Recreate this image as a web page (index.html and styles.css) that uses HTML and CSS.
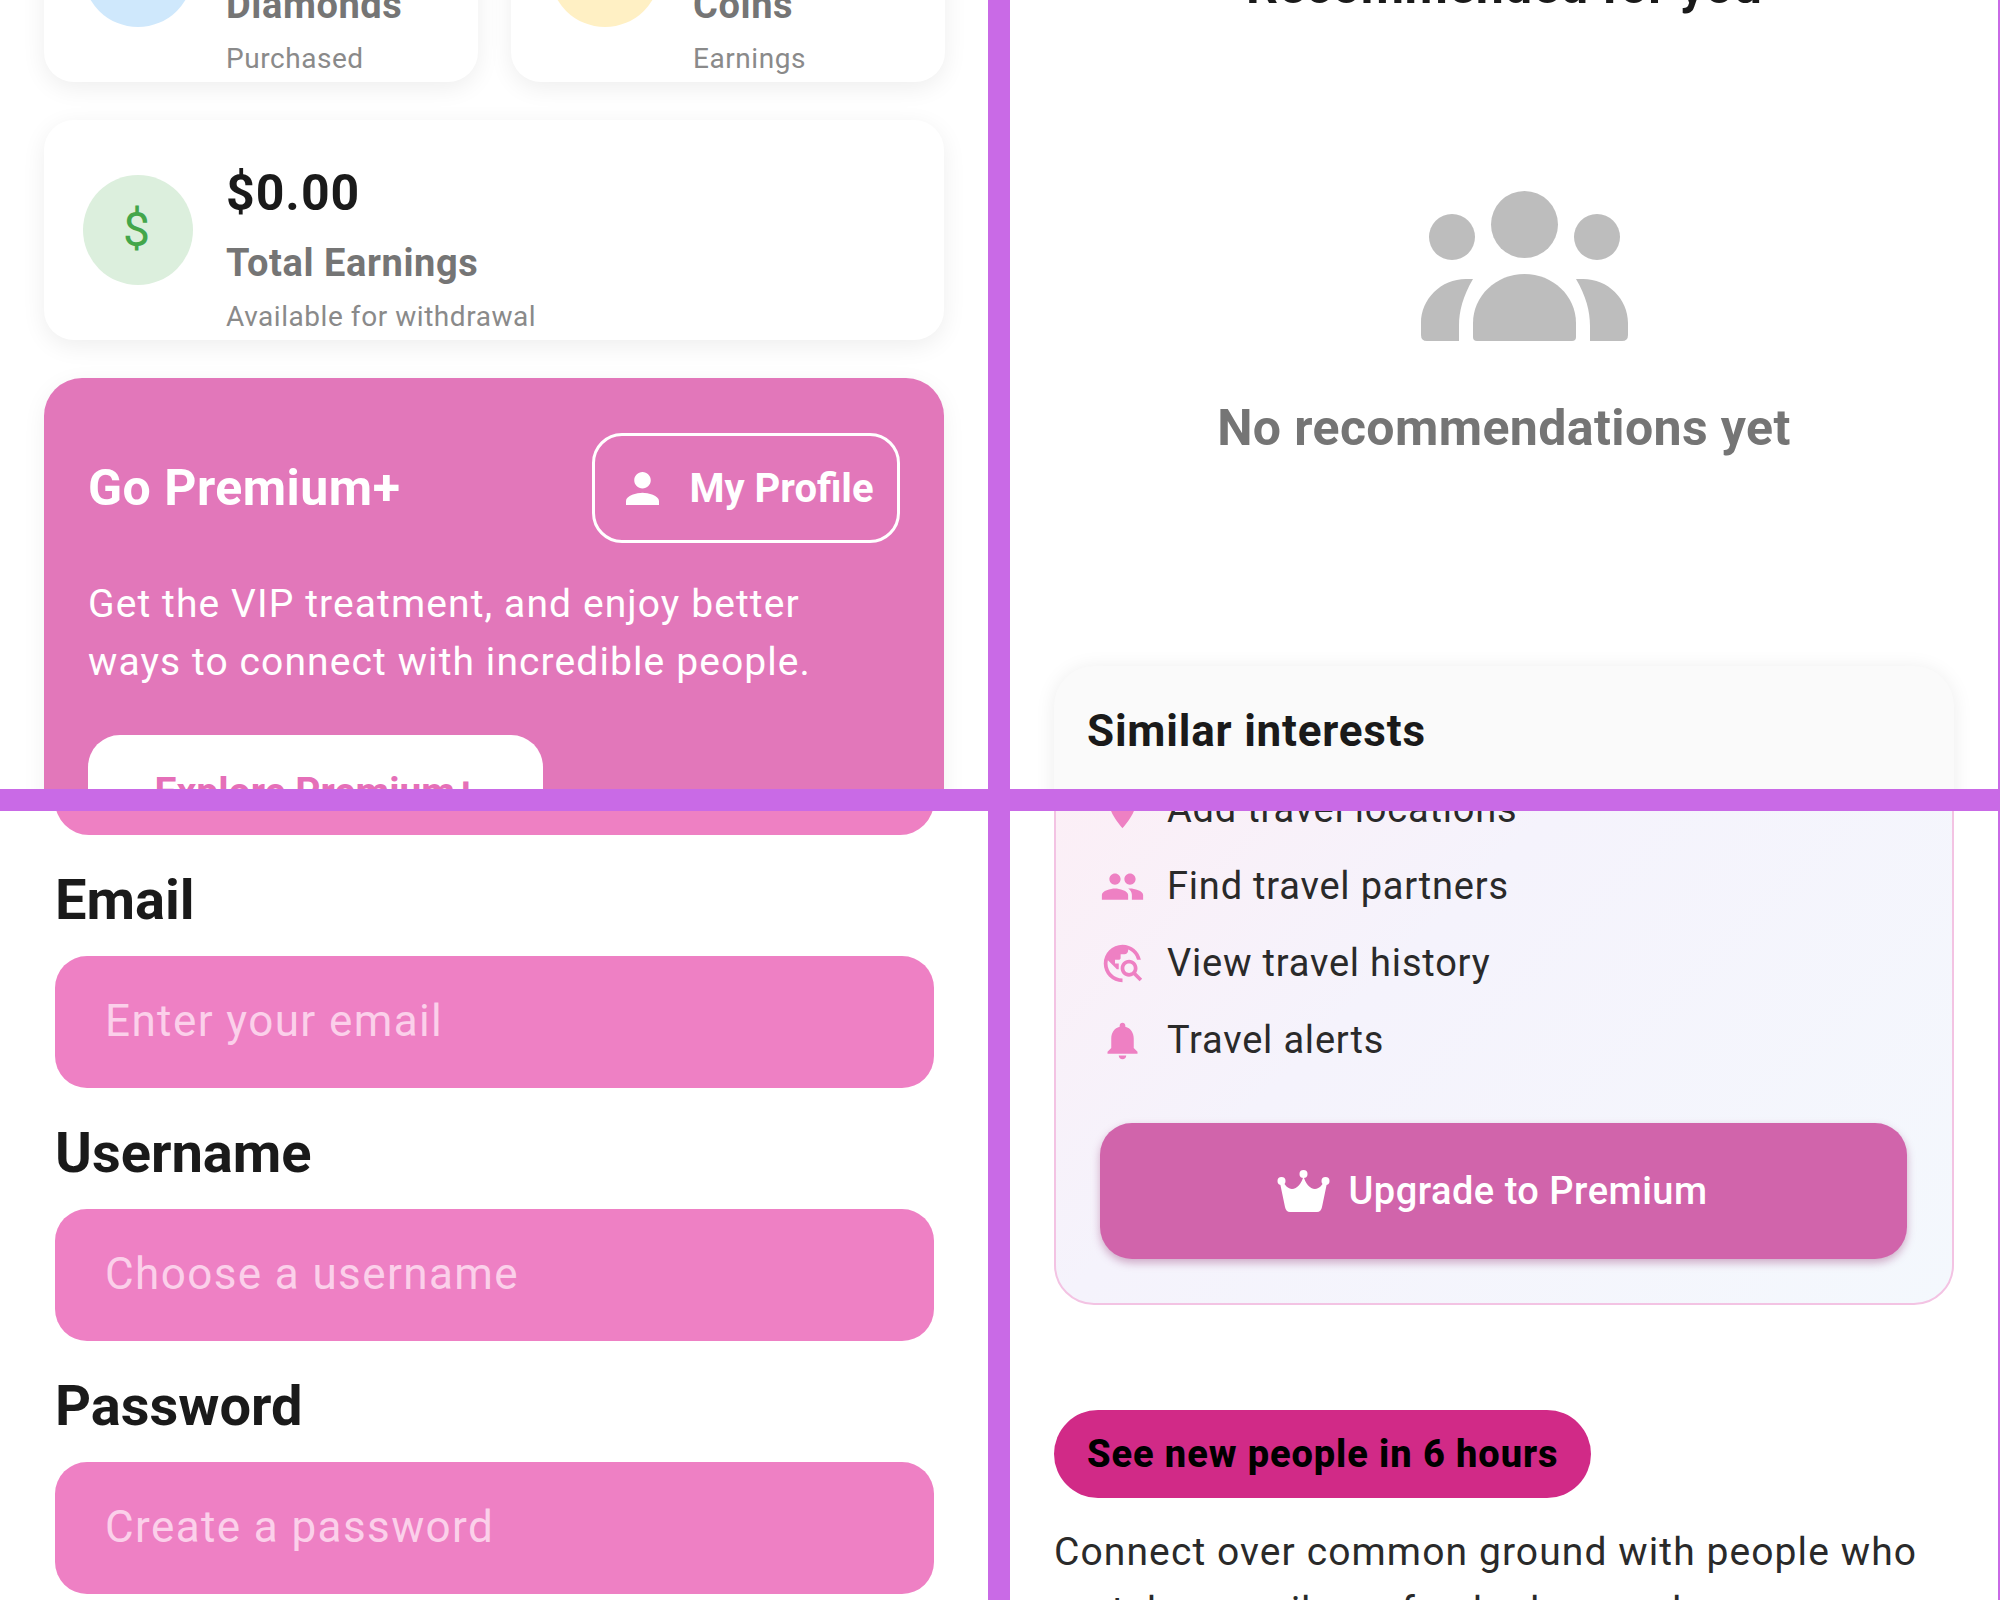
FILE: index.html
```html
<!DOCTYPE html>
<html lang="en">
<head>
<meta charset="utf-8">
<title>Screens</title>
<link rel="stylesheet" href="styles.css">
</head>
<body>
<main class="grid">
  <section class="panel">
    <div class="scroll scroll-a">
      <div class="stat-row">
        <div class="card">
          <div class="circle circle-blue"></div>
          <div class="stat-text">
            <div class="stat-title">Diamonds</div>
            <div class="stat-sub">Purchased</div>
          </div>
        </div>
        <div class="card">
          <div class="circle circle-yellow"></div>
          <div class="stat-text">
            <div class="stat-title">Coins</div>
            <div class="stat-sub">Earnings</div>
          </div>
        </div>
      </div>
      <div class="card earn-card">
        <div class="circle circle-green">$</div>
        <div class="stat-text">
          <div class="earn-value">$0.00</div>
          <div class="stat-title">Total Earnings</div>
          <div class="stat-sub">Available for withdrawal</div>
        </div>
      </div>
      <div class="premium">
        <div class="premium-head">
          <h2 class="premium-title">Go Premium+</h2>
          <button class="profile-btn">
            <svg class="profile-icon" viewBox="4 4 16 16"><path d="M12 12c2.210 0 4-1.790 4-4s-1.790-4-4-4-4 1.790-4 4 1.790 4 4 4zm0 2c-2.670 0-8 1.340-8 4v2h16v-2c0-2.660-5.330-4-8-4z"/></svg>
            My Profile
          </button>
        </div>
        <p class="premium-copy">Get the VIP treatment, and enjoy better ways to connect with incredible people.</p>
        <button class="explore-btn">Explore Premium+</button>
      </div>
    </div>
  </section>

  <section class="panel">
    <div class="scroll scroll-b">
      <h2 class="rec-title">Recommended for you</h2>
      <div class="empty">
        <svg class="empty-icon" viewBox="0 0 207 150">
          <circle cx="103.500" cy="33.500" r="33.500"/>
          <circle cx="31" cy="46" r="23"/>
          <circle cx="176" cy="46" r="23"/>
          <path d="M56 150Q52 150 52 146V132C52 105 75 83 103.500 83C132 83 155 105 155 132V146Q155 150 151 150Z"/>
          <path d="M38 150H6Q0 150 0 144V132C0 108 20 88 45 88H52C42 105 38 120 38 135Z"/>
          <path d="M169 150H201Q207 150 207 144V132C207 108 187 88 162 88H155C165 105 169 120 169 135Z"/>
        </svg>
        <div class="empty-text">No recommendations yet</div>
      </div>
      <div class="similar-top">
        <h3 class="similar-title">Similar interests</h3>
      </div>
    </div>
  </section>

  <section class="panel">
    <div class="scroll scroll-c">
      <div class="premium-tail"></div>
      <label class="field-label">Email</label>
      <div class="field">Enter your email</div>
      <label class="field-label">Username</label>
      <div class="field">Choose a username</div>
      <label class="field-label">Password</label>
      <div class="field">Create a password</div>
    </div>
  </section>

  <section class="panel panel-last">
    <div class="scroll scroll-d">
      <div class="travel-card">
        <ul class="travel-list">
          <li class="travel-item">
            <svg class="travel-icon" viewBox="0 0 24 24"><path d="M12 2C8.130 2 5 5.130 5 9c0 5.250 7 13 7 13s7-7.750 7-13c0-3.870-3.130-7-7-7zm0 9.500c-1.380 0-2.500-1.120-2.500-2.500s1.120-2.500 2.500-2.500 2.500 1.120 2.500 2.500-1.120 2.500-2.500 2.500z"/></svg>
            <span>Add travel locations</span>
          </li>
          <li class="travel-item">
            <svg class="travel-icon" viewBox="0 0 24 24"><path d="M16 11c1.660 0 2.990-1.340 2.990-3S17.660 5 16 5c-1.660 0-3 1.340-3 3s1.340 3 3 3zm-8 0c1.660 0 2.990-1.340 2.990-3S9.660 5 8 5C6.340 5 5 6.340 5 8s1.340 3 3 3zm0 2c-2.330 0-7 1.170-7 3.500V19h14v-2.500c0-2.330-4.670-3.500-7-3.500zm8 0c-.290 0-.620.020-.970.050 1.160.840 1.970 1.970 1.970 3.450V19h6v-2.500c0-2.330-4.670-3.500-7-3.500z"/></svg>
            <span>Find travel partners</span>
          </li>
          <li class="travel-item">
            <svg class="travel-icon" viewBox="0 0 24 24"><path d="M19.300 16.900c.4-.7.7-1.500.7-2.400 0-2.500-2-4.500-4.500-4.500S11 12 11 14.500s2 4.500 4.500 4.500c.9 0 1.700-.3 2.400-.7l3.200 3.200 1.400-1.400-3.200-3.200zm-3.800.1c-1.400 0-2.500-1.100-2.500-2.500s1.100-2.500 2.500-2.500 2.500 1.100 2.500 2.500-1.100 2.500-2.500 2.500zM12 20v2C6.480 22 2 17.520 2 12S6.480 2 12 2c4.840 0 8.870 3.440 9.800 8h-2.070c-.64-2.460-2.400-4.470-4.730-5.410V5c0 1.100-.9 2-2 2h-2v2c0 .55-.45 1-1 1H8v2h2v3H9l-4.790-4.790C4.080 10.790 4 11.380 4 12c0 4.410 3.590 8 8 8z"/></svg>
            <span>View travel history</span>
          </li>
          <li class="travel-item">
            <svg class="travel-icon" viewBox="0 0 24 24"><path d="M12 22c1.100 0 2-.9 2-2h-4c0 1.100.89 2 2 2zm6-6v-5c0-3.070-1.640-5.640-4.500-6.320V4c0-.83-.67-1.500-1.500-1.500s-1.500.67-1.500 1.500v.68C7.630 5.360 6 7.920 6 11v5l-2 2v1h16v-1l-2-2z"/></svg>
            <span>Travel alerts</span>
          </li>
        </ul>
        <button class="upgrade-btn">
          <svg class="crown" viewBox="0 0 53 42">
            <circle cx="26.500" cy="4" r="4"/>
            <circle cx="4.500" cy="11" r="4"/>
            <circle cx="48.500" cy="11" r="4"/>
            <path d="M26.500 6C28 13 33 19 38 19C42 19 45 15 47 12L50 13L45 37Q44 42 40 42H13Q9 42 8 37L3 13L6 12C8 15 11 19 15 19C20 19 25 13 26.500 6Z"/>
          </svg>
          Upgrade to Premium
        </button>
      </div>
      <div class="badge">See new people in 6 hours</div>
      <p class="connect">Connect over common ground with people who match your vibe, refreshed every day.</p>
    </div>
  </section>
</main>
</body>
</html>
```
FILE: styles.css
```css
* { box-sizing: border-box; }
html, body { margin: 0; padding: 0; }
body {
  width: 2000px;
  height: 1600px;
  overflow: hidden;
  background: #c96ae6;
  font-family: Roboto, "Liberation Sans", sans-serif;
  color: #1a1a1a;
}
button { font-family: inherit; border: 0; padding: 0; }
h2, h3, p, ul { margin: 0; padding: 0; }

.grid {
  display: grid;
  grid-template-columns: 988px 988px;
  grid-template-rows: 789px 789px;
  column-gap: 22px;
  row-gap: 22px;
  width: 1998px;
}
.panel { background: #fff; overflow: hidden; }
.scroll { display: flex; flex-direction: column; }

/* top left */
.scroll-a { padding: 0 44px; margin-top: -138px; }
.stat-row { display: grid; grid-template-columns: 434px 434px; column-gap: 33px; }
.card {
  height: 220px;
  background: #fff;
  border-radius: 30px;
  box-shadow: 0 6px 24px rgba(0, 0, 0, .07);
  display: flex;
  align-items: center;
  gap: 33px;
  padding: 0 39px;
}
.stat-text { align-self: flex-end; padding-bottom: 5px; }
.circle {
  flex: none;
  width: 110px;
  height: 110px;
  border-radius: 50%;
  display: flex;
  align-items: center;
  justify-content: center;
}
.circle-blue { background: #cfe8fc; }
.circle-yellow { background: #fff0c4; }
.circle-green { background: #dcefdd; color: #43a64a; font-size: 48px; font-weight: 400; line-height: 1; padding-right: 3px; }
.stat-title { font-size: 38px; font-weight: 700; color: #757575; letter-spacing: .6px; line-height: 44px; }
.stat-sub { font-size: 28px; color: #8a8a8a; letter-spacing: .55px; line-height: 36px; margin-top: 14px; }
.earn-card { margin-top: 38px; }
.earn-value { font-size: 50px; font-weight: 700; color: #1a1a1a; letter-spacing: 1px; line-height: 56px; margin-bottom: 20px; }

.premium {
  margin-top: 38px;
  background: #e277ba;
  border-radius: 38px;
  padding: 55px 44px 0;
  height: 500px;
  box-shadow: 0 6px 24px rgba(0, 0, 0, .06);
  color: #fff;
}
.premium-head { display: flex; align-items: center; justify-content: space-between; }
.premium-title { font-size: 50px; font-weight: 700; letter-spacing: .5px; }
.profile-btn {
  width: 308px;
  height: 110px;
  border: 3px solid #fff;
  border-radius: 30px;
  background: transparent;
  color: #fff;
  font-size: 40px;
  font-weight: 700;
  display: flex;
  align-items: center;
  justify-content: center;
  gap: 28px;
  padding-left: 6px;
}
.profile-icon { width: 37px; height: 33px; fill: #fff; }
.premium-copy { font-size: 39px; line-height: 57.500px; letter-spacing: 1.100px; margin-top: 33px; max-width: 780px; }
.explore-btn {
  display: block;
  width: 455px;
  height: 113px;
  margin-top: 44px;
  border-radius: 32px;
  background: #fff;
  color: #e56fb8;
  font-size: 39px;
  font-weight: 700;
}

/* top right */
.scroll-b { padding: 0 44px; margin-top: -50px; align-items: stretch; }
.rec-title { font-size: 50px; font-weight: 700; text-align: center; line-height: 72px; letter-spacing: .4px; }
.empty { display: flex; flex-direction: column; align-items: center; }
.empty-icon { width: 207px; height: 150px; fill: #bdbdbd; margin: 169px 0 0 40px; }
.empty-text { font-size: 50px; font-weight: 700; color: #757575; margin-top: 59px; line-height: 56px; letter-spacing: .4px; }
.similar-top {
  margin-top: 210px;
  height: 300px;
  background: #fafafa;
  border-radius: 40px;
  padding: 35px 33px;
  box-shadow: 0 2px 20px rgba(0, 0, 0, .08);
}
.similar-title { font-size: 44px; font-weight: 700; line-height: 60px; letter-spacing: .8px; }

/* bottom left */
.scroll-c { padding: 0 54px 0 55px; margin-top: -20px; }
.premium-tail { height: 44px; background: #ee80c3; border-radius: 0 0 34px 34px; }
.field-label { display: block; font-size: 56px; font-weight: 700; line-height: 62px; margin-top: 34px; }
.field {
  height: 132px;
  margin-top: 25px;
  background: #ee80c4;
  border-radius: 32px;
  padding: 0 50px 2px;
  display: flex;
  align-items: center;
  font-size: 44px;
  letter-spacing: 1.400px;
  color: #fbd0ea;
}

/* bottom right */
.panel-last { width: 988px; }
.scroll-d { padding: 0 44px; margin-top: -100px; }
.travel-card {
  height: 594px;
  border: 2px solid #f3c3e3;
  border-radius: 40px;
  background: linear-gradient(135deg, #fdeef5 0%, #f5f3fc 40%, #f4f8fd 100%);
  padding: 0 44px;
}
.travel-list { list-style: none; padding-top: 58px; }
.travel-item {
  display: flex;
  align-items: center;
  gap: 22px;
  height: 77px;
  font-size: 38px;
  letter-spacing: .8px;
  color: #2a2a2a;
}
.travel-item span { margin-bottom: 1px; }
.travel-icon { width: 45px; height: 45px; fill: #ee80c3; flex: none; }
.upgrade-btn {
  display: flex;
  align-items: center;
  justify-content: center;
  gap: 18px;
  width: 807px;
  height: 136px;
  margin-top: 44px;
  padding-right: 22px;
  background: #d164ab;
  border-radius: 32px;
  color: #fff;
  font-size: 38px;
  font-weight: 500;
  letter-spacing: .5px;
  box-shadow: 0 4px 8px rgba(150, 60, 120, .4);
}
.crown { width: 53px; height: 42px; fill: #fff; }
.badge {
  align-self: flex-start;
  margin-top: 105px;
  height: 88px;
  padding: 0 33px;
  border-radius: 44px;
  background: #d12a87;
  color: #000;
  font-size: 38px;
  font-weight: 800;
  letter-spacing: .9px;
  display: flex;
  align-items: center;
}
.connect { font-size: 39px; line-height: 59px; letter-spacing: 1.100px; margin-top: 25px; color: #2a2a2a; }
```
